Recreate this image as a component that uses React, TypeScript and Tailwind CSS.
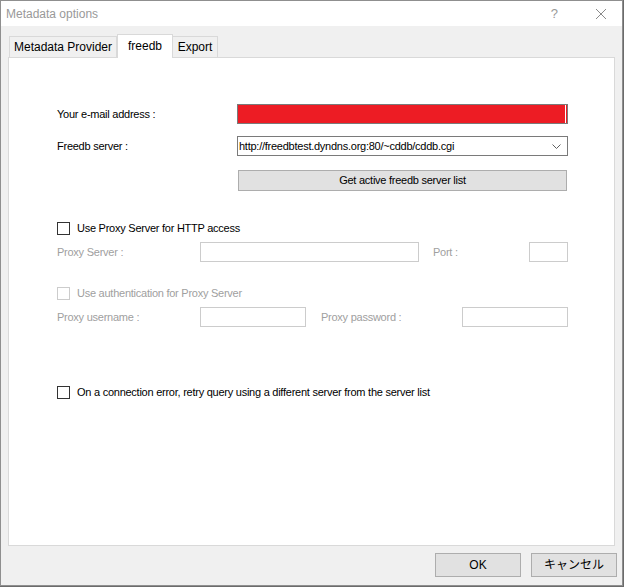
import React from 'react';

const ui = "font-['Liberation_Sans','Noto_Sans_CJK_JP',sans-serif]";

const Check: React.FC<{label: string; disabled?: boolean}> = ({label, disabled}) => (
    <div className="flex items-center h-[13px]">
        <div className={`w-[13px] h-[13px] border bg-white ${disabled ? 'border-[#cccccc]' : 'border-[#333333]'}`}/>
        <span className={`ml-[7px] text-[11px] leading-[13px] tracking-[-0.25px] ${disabled ? 'text-[#a0a0a0]' : 'text-black'}`}>
            {label}
        </span>
    </div>
);

const Field: React.FC<{w: string}> = ({w}) => (
    <div className={`${w} h-[20px] border border-[#cccccc] bg-white`}/>
);

const App: React.FC = () => {
    return (
        <div className={`w-[624px] h-[587px] bg-[#6b6b6b] ${ui}`}>
            <div className="w-[623px] h-[586px] border border-[#8f8f8f] bg-[#f0f0f0] flex flex-col">
                {/* title bar */}
                <div className="h-[25px] bg-white flex items-center shrink-0">
                    <span className="ml-[5px] text-[12px] text-[#999999]">Metadata options</span>
                    <span className="ml-auto mr-[37px] text-[13px] text-[#999999]">?</span>
                    <svg width="12" height="12" viewBox="0 0 12 12" className="mr-[15px]">
                        <path d="M1 1L11 11M11 1L1 11" stroke="#8a8a8a" strokeWidth="1"/>
                    </svg>
                </div>

                <div className="flex-1 flex flex-col pl-[7px] pr-[7px] pt-[8px]">
                    {/* tabs */}
                    <div className="flex items-end h-[23px] text-[12px] pl-[1px]">
                        <div className="w-[108px] h-[21px] border border-b-0 border-[#d9d9d9] bg-[#f0f0f0] flex items-center justify-center text-black">
                            Metadata Provider
                        </div>
                        <div className="w-[56px] h-[24px] -mb-[1px] border border-b-0 border-[#d9d9d9] bg-white flex items-start justify-center pt-[2px] text-black relative z-10">
                            freedb
                        </div>
                        <div className="w-[45px] h-[21px] border border-b-0 border-l-0 border-[#d9d9d9] bg-[#f0f0f0] flex items-center justify-center text-black">
                            Export
                        </div>
                    </div>

                    {/* panel */}
                    <div className="w-[607px] h-[489px] border border-[#d9d9d9] bg-white pl-[48px] pt-[46px] flex flex-col">
                        <div className="flex items-center h-[20px]">
                            <span className="w-[180px] text-[11px] tracking-[-0.25px] text-black">Your e-mail address :</span>
                            <div className="w-[331px] h-[20px] border border-[#7a7a7a] bg-[#ed1c24] flex justify-end">
                                <div className="w-[1px] h-full bg-white mr-[1px]"/>
                            </div>
                        </div>
                        <div className="flex items-center h-[20px] mt-[12px]">
                            <span className="w-[180px] text-[11px] tracking-[-0.25px] text-black">Freedb server :</span>
                            <div className="w-[331px] h-[20px] border border-[#7a7a7a] bg-white flex items-center pl-[1px] pr-[6px]">
                                <span className="text-[11px] tracking-[-0.25px] text-black">http://freedbtest.dyndns.org:80/~cddb/cddb.cgi</span>
                                <svg width="9" height="5" viewBox="0 0 9 5" className="ml-auto">
                                    <path d="M0.5 0.5L4.5 4.5L8.5 0.5" stroke="#606060" fill="none" strokeWidth="1"/>
                                </svg>
                            </div>
                        </div>
                        <div className="flex mt-[14px]">
                            <div className="ml-[181px] w-[329px] h-[21px] border border-[#adadad] bg-[#e1e1e1] flex items-center justify-center text-[11px] tracking-[-0.25px] text-black">
                                Get active freedb server list
                            </div>
                        </div>

                        <div className="mt-[31px]">
                            <Check label="Use Proxy Server for HTTP access"/>
                        </div>
                        <div className="flex items-center h-[20px] mt-[7px] text-[11px] tracking-[-0.25px] text-[#a0a0a0]">
                            <span className="w-[143px]">Proxy Server :</span>
                            <Field w="w-[219px]"/>
                            <span className="ml-[14px] w-[96px]">Port :</span>
                            <Field w="w-[39px]"/>
                        </div>

                        <div className="mt-[25px]">
                            <Check label="Use authentication for Proxy Server" disabled/>
                        </div>
                        <div className="flex items-center h-[20px] mt-[7px] text-[11px] tracking-[-0.25px] text-[#a0a0a0]">
                            <span className="w-[143px]">Proxy username :</span>
                            <Field w="w-[106px]"/>
                            <span className="ml-[15px] w-[141px]">Proxy password :</span>
                            <Field w="w-[106px]"/>
                        </div>

                        <div className="mt-[59px]">
                            <Check label="On a connection error, retry query using a different server from the server list"/>
                        </div>
                    </div>

                    {/* buttons */}
                    <div className="flex justify-end gap-[10px] mt-[7px] -mr-[2px] text-[12px]">
                        <div className="w-[86px] h-[24px] border border-[#adadad] bg-[#e1e1e1] flex items-center justify-center text-black">OK</div>
                        <div className="w-[86px] h-[24px] border border-[#adadad] bg-[#e1e1e1] flex items-center justify-center text-black">キャンセル</div>
                    </div>
                </div>
            </div>
        </div>
    );
};

export default App;
